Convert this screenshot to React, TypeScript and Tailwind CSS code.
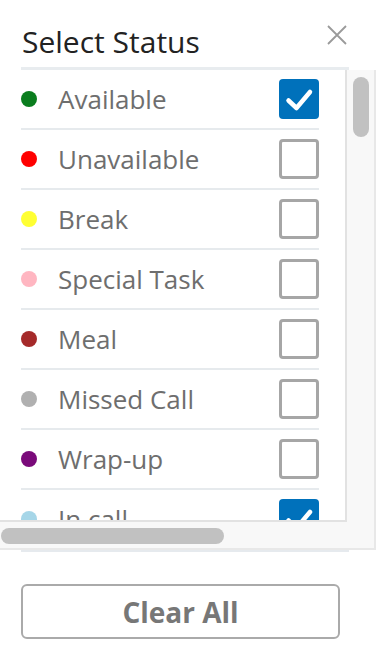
import { useState } from 'react';

const statuses = [
  { label: 'Available', color: 'bg-[#0a7d1e]', checked: true },
  { label: 'Unavailable', color: 'bg-[#ff0000]', checked: false },
  { label: 'Break', color: 'bg-[#ffff33]', checked: false },
  { label: 'Special Task', color: 'bg-[#ffb6c1]', checked: false },
  { label: 'Meal', color: 'bg-[#a52a2a]', checked: false },
  { label: 'Missed Call', color: 'bg-[#b0b0b0]', checked: false },
  { label: 'Wrap-up', color: 'bg-[#7a0a7a]', checked: false },
  { label: 'In call', color: 'bg-[#a6d6e8]', checked: true },
];

function CheckBox({ checked }: { checked: boolean }) {
  if (checked) {
    return (
      <div className="w-10 h-10 shrink-0 rounded-[4px] bg-[#0071bb] flex items-center justify-center">
        <svg width="40" height="40" viewBox="0 0 40 40" fill="none">
          <path d="M9.5 21.5 L17.5 29 L31 13" stroke="white" strokeWidth="4.5" strokeLinecap="round" strokeLinejoin="round" />
        </svg>
      </div>
    );
  }
  return <div className="w-10 h-10 shrink-0 rounded-[4px] border-[3px] border-[#a6a6a6] bg-white" />;
}

export default function App() {
  const [items] = useState(statuses);

  return (
    <div className="w-[376px] h-[654px] bg-white overflow-hidden" style={{ fontFamily: '"Open Sans", "Noto Sans", sans-serif' }}>
      {/* Header */}
      <div className="flex items-start justify-between pl-[22px] pr-[29px] pt-[22px] pb-[5px]">
        <h2 className="text-[30px] leading-[40px] text-[#222222]">Select Status</h2>
        <svg className="mt-[3px]" width="20" height="20" viewBox="0 0 20 20" fill="none">
          <path d="M1 1 L19 19 M19 1 L1 19" stroke="#9a9a9a" strokeWidth="1.8" />
        </svg>
      </div>
      <div className="ml-[21px] w-[328px] h-[3px] bg-[#e8ecef]" />

      {/* Scroll area */}
      <div className="w-[376px] border-r-2 border-b-2 border-[#e8e8e8] bg-[#f8f8f8]">
        <div className="flex">
          <div className="w-[347px] h-[452px] overflow-hidden bg-white border-r-2 border-b-2 border-[#e2e2e2]">
            {items.map((s) => (
              <div
                key={s.label}
                className="ml-[21px] w-[298px] h-[60px] shrink-0 flex items-center border-b-2 border-[#e6eaed]"
              >
                <span className={`w-4 h-4 rounded-full shrink-0 ${s.color}`} />
                <span className="ml-[21px] flex-1 text-[26px] text-[#6e6e6e]">{s.label}</span>
                <CheckBox checked={s.checked} />
              </div>
            ))}
          </div>
          <div className="flex-1 pl-[6px] pt-[7px]">
            <div className="w-4 h-[60px] rounded-full bg-[#c1c1c1]" />
          </div>
        </div>
        <div className="h-[26px] pt-[6px] pl-px">
          <div className="w-[223px] h-4 rounded-full bg-[#c1c1c1]" />
        </div>
      </div>
      <div className="ml-[21px] w-[328px] h-[2px] bg-[#e6eaee]" />

      {/* Footer */}
      <div className="pt-8 pl-[21px]">
        <button className="w-[319px] h-[55px] rounded-md border-2 border-[#aaaaaa] bg-white text-[28px] font-bold text-[#777777]">
          Clear All
        </button>
      </div>
    </div>
  );
}
